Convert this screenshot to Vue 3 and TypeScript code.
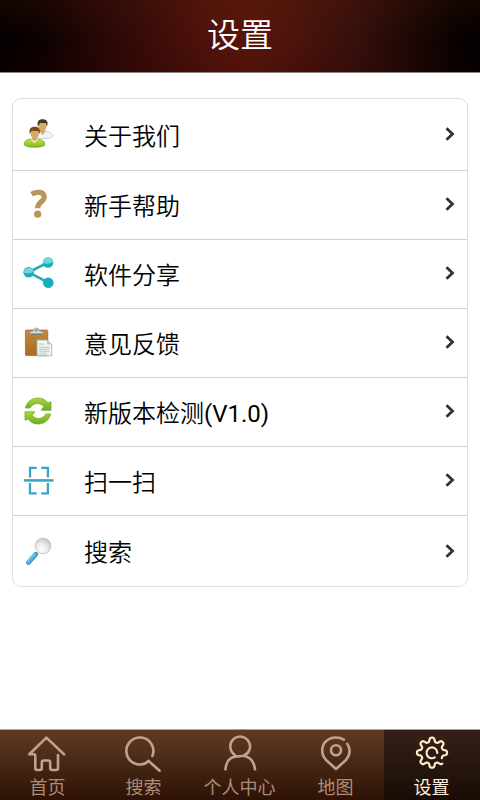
<script setup lang="ts">
interface Row { icon: string; label: string; version?: string }

const rows: Row[] = [
  { icon: 'people', label: '关于我们' },
  { icon: 'help', label: '新手帮助' },
  { icon: 'share', label: '软件分享' },
  { icon: 'feedback', label: '意见反馈' },
  { icon: 'update', label: '新版本检测', version: '(V1.0)' },
  { icon: 'scan', label: '扫一扫' },
  { icon: 'search', label: '搜索' },
]

// Outline of the eight-toothed gear, left open at the lower right.
function gearPath(): string {
  const points: string[] = []
  for (let deg = 47; deg <= 390; deg += 3) {
    const a = (deg * Math.PI) / 180
    const wave = Math.cos(8 * a)
    const r = 13 + 2.1 * Math.tanh(2 * wave)
    points.push(`${(20 + r * Math.cos(a)).toFixed(2)} ${(19.7 + r * Math.sin(a)).toFixed(2)}`)
  }
  return 'M' + points.join('L')
}

interface Tab { label: string; paths: string[] }

const tabs: Tab[] = [
  {
    label: '首页',
    paths: ['M36 21.3L18.4 4.6L1.3 21.3H6Q7.3 21.3 7.3 22.8V35Q7.3 37 9.3 37H11.8Q13.8 37 13.8 35V29.5Q13.8 27.5 15.8 27.5H20.2Q22.2 27.5 22.2 29.5V35Q22.2 37 24.2 37H28Q30 37 30 35V22'],
  },
  { label: '搜索', paths: ['M28.4 23A13.5 13.5 0 1 0 22 30L24.4 27.8L35.6 37.7'] },
  {
    label: '个人中心',
    paths: ['M5.4 36.3C6 29 10 23.6 17 23.4Q20 23.4 23.5 22.8A9.9 9.9 0 1 0 14.5 21.6', 'M23.5 22.8C30 24 34.3 29 35 36.3'],
  },
  {
    label: '地图',
    paths: ['M31.2 10.8C35.3 17 33.6 22.5 30 27L20 36L10 27C4 20 6 11.5 10.5 7.8C15.5 3.6 23 3.5 27.8 6.7', 'M25 17.2A5 5 0 1 1 15 17.2A5 5 0 1 1 25 17.2'],
  },
  { label: '设置', paths: [gearPath(), 'M25.3 20A5.4 5.4 0 1 0 22.8 24.4'] },
]
const active = 4
</script>

<template>
  <div class="screen">
    <header class="header"><h1>设置</h1></header>

    <main class="content">
      <ul class="card">
        <li v-for="row in rows" :key="row.label" class="row">
          <svg class="icon" viewBox="0 0 30 30">
            <defs>
              <linearGradient id="shirt" x2="0" y2="1"><stop stop-color="#c4e84a" /><stop offset="1" stop-color="#79b51c" /></linearGradient>
              <linearGradient id="wood" x2="0" y2="1"><stop stop-color="#c48a3e" /><stop offset="1" stop-color="#a66b24" /></linearGradient>
              <linearGradient id="leaf" x2="0" y2="1"><stop stop-color="#a9d83e" /><stop offset="1" stop-color="#69ad1c" /></linearGradient>
              <radialGradient id="lens" cx=".4" cy=".7" r=".75"><stop stop-color="#fff" /><stop offset=".5" stop-color="#e9e9e9" /><stop offset="1" stop-color="#bdbdbd" /></radialGradient>
            </defs>
            <g v-if="row.icon === 'people'">
              <path d="M11.5 17C12 13.5 15 12 19.5 12S29.5 13 29.8 17.2C29 20.3 12 20.3 11.5 17Z" fill="#edf5f9" stroke="#a9c4cd" stroke-width=".7" />
              <path d="M17 10H22V13L19.7 16L17 13Z" fill="#d9a568" />
              <ellipse cx="19.6" cy="6.7" rx="4" ry="5.2" fill="#d9a86d" />
              <path d="M15 7.5C13.5 2 16 0 20 .2C24 .3 25.5 3 24 7.5L22.8 4H17Z" fill="#4a3526" />
              <path d="M1 25.5C1.5 21 5 20 11.5 20S21.7 21.5 22 25.5C20.5 29.2 2.5 29.2 1 25.5Z" fill="url(#shirt)" stroke="#75a825" stroke-width=".8" />
              <path d="M8 20L11.4 24L15 20Z" fill="#fffbe8" />
              <path d="M9 17H14V20L11.5 22.5L9 20Z" fill="#d5a05f" />
              <ellipse cx="11.7" cy="14.5" rx="4.2" ry="5.2" fill="#dca764" />
              <path d="M6.8 15C5.5 9.5 8 7.6 12 7.8C16 7.8 18 10.5 16.5 15L15 12H8.5Z" fill="#7c4c20" />
            </g>
            <g v-else-if="row.icon === 'help'">
              <path d="M8.6 5.2C13.5 2.3 21.2 2.2 21.2 8C21.2 13.2 14.7 12.2 14.7 19.3" fill="none" stroke="#b9955b" stroke-width="5.2" />
              <circle cx="14.7" cy="25.2" r="3.6" fill="#b9955b" />
            </g>
            <g v-else-if="row.icon === 'share'">
              <path d="M25 4.3L5.7 14.3L25.3 24.7" fill="none" stroke="#25a9b5" stroke-width="2.6" />
              <g fill="#16b0bd"><circle cx="25" cy="4.5" r="5.3" /><circle cx="5.7" cy="14.3" r="5.3" /><circle cx="25.3" cy="24.7" r="5.3" /></g>
              <path d="M20 5A5 5 0 0 1 30 4Q25 7 20 5ZM.8 14.5A5 5 0 0 1 10.6 13.5Q6 17 .8 14.5Z" fill="#75d5dc" />
            </g>
            <g v-else-if="row.icon === 'feedback'">
              <rect x="2.4" y="3" width="22.4" height="25.6" rx=".8" fill="url(#wood)" stroke="#9b6623" stroke-width=".7" />
              <path d="M7 5.5Q7.5 4 10.4 3.7Q11 1 13.4 1T16.5 3.7Q19.5 4 20 5.5V7.4H7Z" fill="#d8d8d8" stroke="#777" stroke-width=".6" />
              <circle cx="13.4" cy="3.5" r="1" fill="#666" /><path d="M8 7H19" stroke="#555" stroke-width=".8" />
              <path d="M14 13H24L28.7 17.6V28.8H14Z" fill="#eff7f5" stroke="#8fafac" stroke-width=".8" />
              <path d="M24 13V17.6H28.7Z" fill="#b6cbc9" />
              <path d="M16 17H21M16 20.3H26.5M16 22.6H26.5M16 24.8H26.5M16 27H24" stroke="#a9bbbd" stroke-width=".9" />
            </g>
            <g v-else-if="row.icon === 'update'" stroke="#6da321" stroke-width=".7" stroke-linejoin="round" fill="url(#leaf)">
              <path d="M2.3 12C4 5.5 9 2 15 2C19.5 2 22.3 3.7 24.8 7L28 5.7V14.3H18.2L20.8 10.6C18.3 7.8 14.5 6.8 11.2 8.2Q8.5 9.3 7 12Z" />
              <path d="M27.7 18C26 24.5 21 28 15 28C10.5 28 7.6 26.3 5.2 23L2 24.3V15.7H11.8L9.2 19.4C11.7 22.2 15.5 23.2 18.8 21.8Q21.5 20.7 23 18Z" />
            </g>
            <g v-else-if="row.icon === 'scan'" fill="none" stroke="#34a6c8" stroke-width="2.3">
              <path d="M13.7 2.8H7V12.5M18.3 2.8H24.9V12.5M7 18V28.3H13.7M24.9 18V28.3H18.3" />
              <path d="M1 15.4H30.5" stroke-width="2.6" />
            </g>
            <g v-else>
              <path d="M14.5 16.5L12 19.5" stroke="#999" stroke-width="2" />
              <path d="M12.6 18.5L5.4 26.5" stroke="#2687b7" stroke-width="4.8" stroke-linecap="round" />
              <path d="M12.3 18.5L5 26.2" stroke="#43b5e0" stroke-width="3.6" stroke-linecap="round" />
              <path d="M11.5 18L4.6 25.3" stroke="#a7e2f6" stroke-width="1" stroke-linecap="round" />
              <circle cx="20" cy="9.9" r="7.9" fill="url(#lens)" stroke="#c2c2c2" stroke-width=".8" />
            </g>
          </svg>
          <span class="label">{{ row.label }}<span v-if="row.version" class="version">{{ row.version }}</span></span>
          <svg class="chevron" viewBox="0 0 10 14"><path d="M1.5 1.3L7.5 7L1.5 12.7" /></svg>
        </li>
      </ul>
    </main>

    <nav class="tabs">
      <a v-for="(tab, i) in tabs" :key="tab.label" class="tab" :class="{ active: i === active }">
        <svg class="tab-icon" viewBox="0 0 40 40"><path v-for="d in tab.paths" :key="d" :d="d" /></svg>
        <span class="tab-label">{{ tab.label }}</span>
      </a>
    </nav>
  </div>
</template>

<style>
body { margin: 0; background: #fff; }
</style>

<style scoped>
.screen {
  display: flex;
  flex-direction: column;
  width: 480px;
  height: 800px;
  overflow: hidden;
  background: #fff;
  font-family: Roboto, "Noto Sans CJK SC", sans-serif;
  font-weight: 350;
}
.header {
  box-sizing: border-box;
  height: 73px;
  flex: none;
  border-bottom: 1px solid #8c8280;
  background:
    linear-gradient(rgba(90, 32, 8, 0.18), transparent 55%, rgba(40, 0, 0, 0.18)),
    linear-gradient(90deg, #040000 0%, #0b0101 8%, #240706 20%, #3b0c08 32%, #50120b 43%, #57160b 52%, #4c130b 62%, #35100b 74%, #1c0705 86%, #080101 95%, #030000 100%);
}
h1 {
  margin: 0;
  height: 72px;
  line-height: 71px;
  text-align: center;
  color: #fff;
  font-size: 33px;
  font-weight: 350;
}
.content { flex: 1; padding: 25px 12px 0; }
.card {
  margin: 0;
  padding: 0;
  list-style: none;
  border: 1px solid #dedede;
  border-radius: 9px;
}
.row {
  box-sizing: border-box;
  display: flex;
  align-items: center;
  height: 69px;
  padding: 0 12px 2px 10px;
  border-bottom: 1px solid #cfcfcf;
}
.row:first-child { height: 72px; }
.row:last-child { height: 70px; padding-bottom: 0; border-bottom: 0; }
.icon { width: 30px; height: 30px; flex: none; overflow: visible; }
.label {
  flex: 1;
  margin-left: 31px;
  padding-top: 6px;
  color: #000;
  font-size: 24px;
  line-height: 34px;
  white-space: nowrap;
}
.row:last-child .label { padding-top: 4px; }
.version { font-weight: 400; }
.chevron {
  width: 10px;
  height: 14px;
  fill: none;
  stroke: #333;
  stroke-width: 2.8;
}
.tabs {
  box-sizing: border-box;
  display: flex;
  height: 71px;
  flex: none;
  border-top: 1px solid #b2a195;
  background: linear-gradient(#60391f, #50301b 30%, #3d200f 65%, #2e1206);
}
.tab {
  flex: 1;
  display: flex;
  flex-direction: column;
  align-items: center;
  padding-top: 3px;
  color: #ad8c76;
  font-size: 18px;
  font-weight: 400;
  line-height: 29px;
}
.tab-label { height: 27px; padding-right: 1px; }
.tab-icon {
  width: 40px;
  height: 40px;
  flex: none;
  fill: none;
  stroke: #c2a18c;
  stroke-width: 2.6;
  stroke-linecap: round;
  stroke-linejoin: round;
}
.active {
  color: #fff0dc;
  background: linear-gradient(#352016, #291910 40%, #190c04);
}
.active .tab-icon { stroke: #ffe9c9; stroke-width: 2.2; }
</style>
